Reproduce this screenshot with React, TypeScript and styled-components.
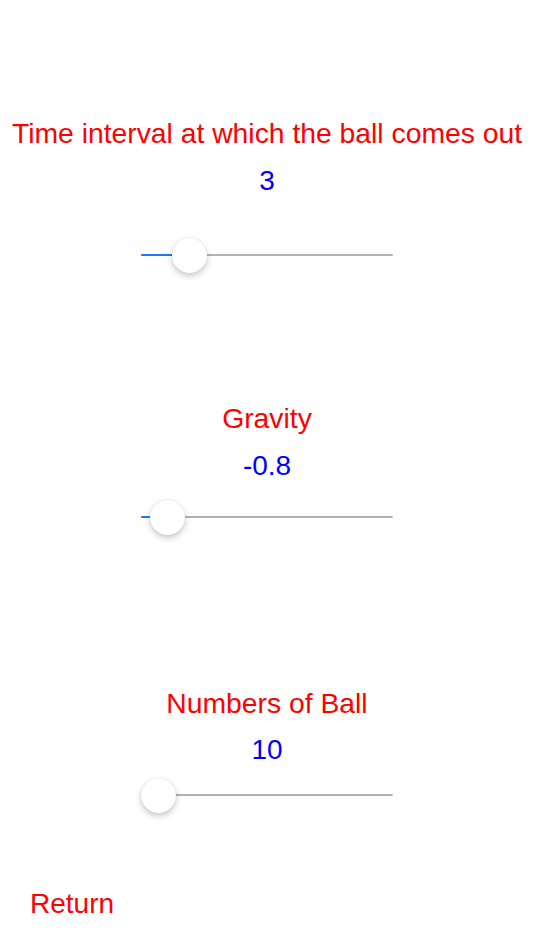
import * as React from 'react';
import styled, { createGlobalStyle } from 'styled-components';

const GlobalStyle = createGlobalStyle`
	html, body {
		margin: 0;
		padding: 0;
		background: #ffffff;
	}
	body {
		font-family: "Liberation Sans", Arial, sans-serif;
	}
`;

const Screen = styled.div`
	width: 534px;
	height: 950px;
	display: flex;
	flex-direction: column;
	align-items: center;
	padding-top: 116px;
	box-sizing: border-box;
	overflow: hidden;
`;

const Label = styled.div<{ $top: number }>`
	margin-top: ${p => p.$top}px;
	height: 34px;
	line-height: 34px;
	font-size: 28.3px;
	color: #ff0000;
	white-space: nowrap;
	text-align: center;
`;

const Value = styled.div<{ $top: number }>`
	margin-top: ${p => p.$top}px;
	height: 34px;
	line-height: 34px;
	font-size: 28px;
	color: #0000ff;
	text-align: center;
`;

const SliderBox = styled.div<{ $top: number }>`
	margin-top: ${p => p.$top}px;
	width: 252px;
	height: 36px;
	position: relative;
	display: flex;
	align-items: center;
`;

const Track = styled.div`
	width: 100%;
	height: 2.5px;
	border-radius: 1px;
	background: #b3b3b3;
	position: relative;
`;

const Fill = styled.div`
	position: absolute;
	left: 0;
	top: 0;
	height: 100%;
	border-radius: 1px;
	background: #1a7cf9;
`;

const Thumb = styled.div`
	position: absolute;
	top: 0.5px;
	width: 35px;
	height: 35px;
	margin-left: -17.5px;
	border-radius: 50%;
	background: #ffffff;
	box-shadow: 0 3px 6px rgba(0, 0, 0, 0.22), 0 0 1px rgba(0, 0, 0, 0.15);
`;

const ReturnRow = styled.div`
	align-self: stretch;
	margin-top: 74px;
	padding-left: 30px;
	height: 34px;
	line-height: 34px;
	font-size: 28px;
	color: #ff0000;
	cursor: pointer;
`;

interface ISetting {
	label: string;
	value: number;
	min: number;
	max: number;
	gaps: [number, number, number];
}

const settings: Array<ISetting> = [
	{ label: 'Time interval at which the ball comes out', value: 3, min: 2, max: 9, gaps: [0, 14, 39] },
	{ label: 'Gravity', value: -0.8, min: -1, max: 4, gaps: [128, 14, 16] },
	{ label: 'Numbers of Ball', value: 10, min: 10, max: 100, gaps: [151, 13, 10] },
];

const SLIDER_WIDTH = 252;
const THUMB = 35;

const Slider = ({ value, min, max, top }: { value: number; min: number; max: number; top: number }) => {
	const f = (value - min) / (max - min);
	const center = THUMB / 2 + f * (SLIDER_WIDTH - THUMB);
	return (
		<SliderBox $top={top}>
			<Track>
				<Fill style={{ width: center }} />
			</Track>
			<Thumb style={{ left: center }} />
		</SliderBox>
	);
};

export default function App() {
	return (
		<>
			<GlobalStyle />
			<Screen>
				{settings.map(s => (
					<React.Fragment key={s.label}>
						<Label $top={s.gaps[0]}>{s.label}</Label>
						<Value $top={s.gaps[1]}>{s.value}</Value>
						<Slider value={s.value} min={s.min} max={s.max} top={s.gaps[2]} />
					</React.Fragment>
				))}
				<ReturnRow>Return</ReturnRow>
			</Screen>
		</>
	);
}
